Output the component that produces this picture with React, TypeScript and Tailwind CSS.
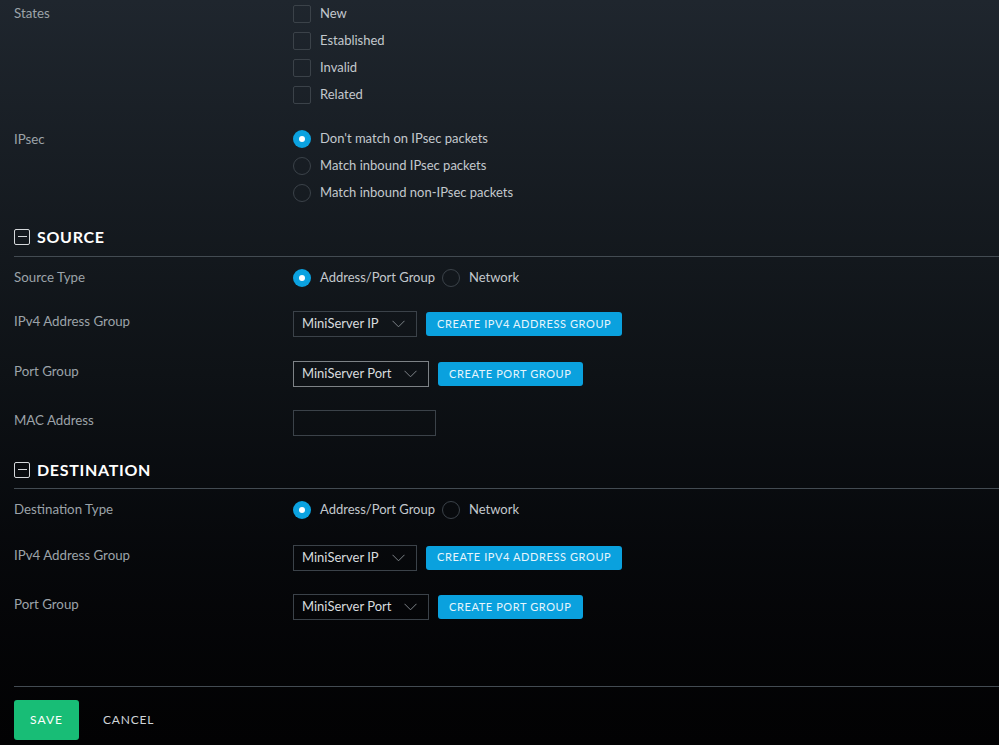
import React from "react";

const font = { fontFamily: "Lato, 'Open Sans', sans-serif" };

function Checkbox({ label }: { label: string }) {
  return (
    <div className="flex h-[27px] items-center">
      <span className="box-border h-[18px] w-[18px] rounded-[2px] border border-[#3b4249]" />
      <span className="ml-[9px] text-[13px] text-[#c3c8cd]">{label}</span>
    </div>
  );
}

function Radio({ label, checked }: { label: string; checked?: boolean }) {
  return (
    <div className="flex h-[27px] items-center">
      {checked ? (
        <span className="flex h-[18px] w-[18px] items-center justify-center rounded-full bg-[#0ba2e0]">
          <span className="h-[6px] w-[6px] rounded-full bg-white" />
        </span>
      ) : (
        <span className="box-border h-[18px] w-[18px] rounded-full border border-[#3b4249]" />
      )}
      <span className="ml-[9px] text-[13px] text-[#c3c8cd]">{label}</span>
    </div>
  );
}

function Label({ children }: { children: React.ReactNode }) {
  return <div className="w-[279px] shrink-0 text-[13.3px] text-[#9ca3a9]">{children}</div>;
}

function Select({ value, width, focused }: { value: string; width: string; focused?: boolean }) {
  return (
    <div
      className={`box-border flex h-[26px] items-center justify-between border pl-[8px] pr-[11px] ${width} ${
        focused ? "border-[#7d8286]" : "border-[#3b4249]"
      }`}
    >
      <span className="text-[13px] text-[#d8dcdf]">{value}</span>
      <svg width="13" height="8" viewBox="0 0 13 8" fill="none">
        <path d="M0.5 0.8 L6.5 6.8 L12.5 0.8" stroke="#7d8388" strokeWidth="1" />
      </svg>
    </div>
  );
}

function BlueButton({ children }: { children: React.ReactNode }) {
  return (
    <div className="ml-[9px] flex h-[24px] items-center rounded-[3px] bg-[#0aa1de] px-[11px] text-[11px] tracking-[0.6px] text-[#e6f5fc]">
      {children}
    </div>
  );
}

function SectionHeader({ title, mt }: { title: string; mt: string }) {
  return (
    <div className={`flex h-[29px] items-center ${mt}`}>
      <span className="box-border flex h-[16px] w-[16px] items-center justify-center rounded-[2px] border border-[#d5d8db]">
        <span className="h-px w-[9px] bg-[#d5d8db]" />
      </span>
      <span className="ml-[7px] text-[16px] font-bold tracking-[0.7px] text-white">{title}</span>
    </div>
  );
}

export default function App() {
  return (
    <div
      style={font}
      className="h-[745px] w-full overflow-hidden bg-gradient-to-b from-[#1f262e] via-[#0e1216] to-[#020203]"
    >
      <div className="pl-[14px]">
        {/* States */}
        <div className="flex">
          <div className="w-[279px] shrink-0 pt-[4px] text-[13.3px] text-[#9ca3a9]">States</div>
          <div>
            <Checkbox label="New" />
            <Checkbox label="Established" />
            <Checkbox label="Invalid" />
            <Checkbox label="Related" />
          </div>
        </div>

        {/* IPsec */}
        <div className="mt-[17px] flex">
          <div className="w-[279px] shrink-0 pt-[5px] text-[13.3px] text-[#9ca3a9]">IPsec</div>
          <div>
            <Radio label="Don't match on IPsec packets" checked />
            <Radio label="Match inbound IPsec packets" />
            <Radio label="Match inbound non-IPsec packets" />
          </div>
        </div>

        <SectionHeader title="SOURCE" mt="mt-[16px]" />
      </div>
      <div className="ml-[14px] mt-[5px] h-px bg-[#434b52]" />
      <div className="pl-[14px]">
        <div className="flex h-[41px] items-center">
          <Label>Source Type</Label>
          <div className="flex items-center">
            <Radio label="Address/Port Group" checked />
            <div className="ml-[7px]">
              <Radio label="Network" />
            </div>
          </div>
        </div>

        <div className="mt-[13px] flex h-[26px] items-center">
          <Label>
            <div className="-mt-[4px]">IPv4 Address Group</div>
          </Label>
          <Select value="MiniServer IP" width="w-[124px]" />
          <BlueButton>CREATE IPV4 ADDRESS GROUP</BlueButton>
        </div>

        <div className="mt-[24px] flex h-[26px] items-center">
          <Label>
            <div className="-mt-[4px]">Port Group</div>
          </Label>
          <Select value="MiniServer Port" width="w-[136px]" focused />
          <BlueButton>CREATE PORT GROUP</BlueButton>
        </div>

        <div className="mt-[23px] flex h-[26px] items-center">
          <Label>
            <div className="-mt-[4px]">MAC Address</div>
          </Label>
          <div className="box-border h-[26px] w-[143px] border border-[#3b4249]" />
        </div>

        <SectionHeader title="DESTINATION" mt="mt-[19px]" />
      </div>
      <div className="ml-[14px] mt-[4px] h-px bg-[#434b52]" />
      <div className="pl-[14px]">
        <div className="flex h-[42px] items-center">
          <Label>Destination Type</Label>
          <div className="flex items-center">
            <Radio label="Address/Port Group" checked />
            <div className="ml-[7px]">
              <Radio label="Network" />
            </div>
          </div>
        </div>

        <div className="mt-[14px] flex h-[25px] items-center">
          <Label>
            <div className="-mt-[4px]">IPv4 Address Group</div>
          </Label>
          <Select value="MiniServer IP" width="w-[124px]" />
          <BlueButton>CREATE IPV4 ADDRESS GROUP</BlueButton>
        </div>

        <div className="mt-[24px] flex h-[26px] items-center">
          <Label>
            <div className="-mt-[4px]">Port Group</div>
          </Label>
          <Select value="MiniServer Port" width="w-[136px]" />
          <BlueButton>CREATE PORT GROUP</BlueButton>
        </div>
      </div>

      <div className="ml-[14px] mt-[66px] h-px bg-[#434b52]" />
      <div className="mt-[13px] flex items-center pl-[14px]">
        <div className="flex h-[40px] w-[65px] items-center justify-center rounded-[3px] bg-[#18bd76] text-[12px] tracking-[1px] text-white">
          SAVE
        </div>
        <div className="ml-[24px] text-[12px] tracking-[0.8px] text-[#d0d4d8]">CANCEL</div>
      </div>
    </div>
  );
}
